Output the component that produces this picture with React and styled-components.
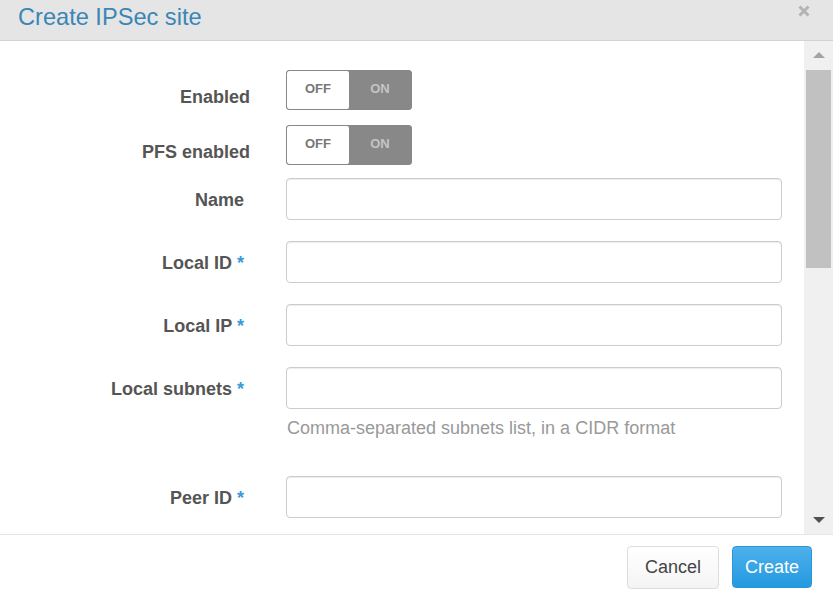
import React from "react";
import styled, { createGlobalStyle } from "styled-components";

const GlobalStyle = createGlobalStyle`
    html, body {
        margin: 0;
        padding: 0;
        background: #ffffff;
    }
    body {
        font-family: "Liberation Sans", Arial, sans-serif;
    }
    * {
        box-sizing: border-box;
    }
`;

const Modal = styled.div`
    width: 833px;
    height: 596px;
    display: flex;
    flex-direction: column;
    background: #fff;
    overflow: hidden;
`;

const Header = styled.div`
    height: 41px;
    flex-shrink: 0;
    display: flex;
    align-items: center;
    justify-content: space-between;
    padding: 0 23px 0 18px;
    background: #e5e5e5;
    border-bottom: 1px solid #d2d2d2;
`;

const Title = styled.h3`
    margin: 0;
    margin-top: -6px;
    font-size: 23.6px;
    font-weight: normal;
    color: #3a86b6;
`;

const CloseButton = styled.button`
    align-self: flex-start;
    margin-top: 5px;
    padding: 0;
    border: none;
    background: transparent;
    display: flex;
`;

const CloseIcon = () => (
    <svg width="12" height="12" viewBox="0 0 12 12">
        <path d="M1.5 1.5 L10.5 10.5 M10.5 1.5 L1.5 10.5" stroke="#b4b4b4" strokeWidth="3" strokeLinecap="butt" />
    </svg>
);

const Body = styled.div`
    flex: 1;
    display: flex;
    min-height: 0;
`;

const Content = styled.div`
    flex: 1;
    padding-top: 29px;
    display: flex;
    flex-direction: column;
    overflow: hidden;
`;

const Row = styled.div`
    display: grid;
    grid-template-columns: ${p => (p.toggle ? "250px" : "244px")} 496px;
    column-gap: ${p => (p.toggle ? "36px" : "42px")};
    align-items: start;
    flex-shrink: 0;
    margin-bottom: ${p => p.gap}px;
`;

const Label = styled.label`
    text-align: right;
    font-size: 18px;
    line-height: 21px;
    font-weight: bold;
    color: #555;
    padding-top: ${p => p.top}px;
`;

const Star = styled.span`
    color: #3a9ad9;
`;

const Field = styled.div`
    display: flex;
    flex-direction: column;
`;

const Input = styled.input`
    width: 496px;
    height: 42px;
    border: 1px solid #ccc;
    border-radius: 4px;
    box-shadow: inset 0 1px 1px rgba(0, 0, 0, 0.075);
    padding: 6px 12px;
    font-size: 16px;
    font-family: inherit;
    outline: none;
`;

const Help = styled.div`
    margin-top: 9px;
    padding-left: 1px;
    font-size: 18px;
    line-height: 21px;
    color: #999;
`;

const Toggle = styled.div`
    width: 126px;
    height: 40px;
    display: flex;
    border: 1px solid #888;
    border-radius: 3px;
    overflow: hidden;
    background: #888;
`;

const ToggleSide = styled.span`
    flex: 1;
    display: flex;
    align-items: center;
    justify-content: center;
    padding-bottom: 3px;
    font-size: 13px;
    font-weight: bold;
    background: ${p => (p.on ? "#888" : "#fff")};
    color: ${p => (p.on ? "#c4c4c4" : "#777")};
    border-radius: ${p => (p.on ? "0" : "2px")};
`;

const Scrollbar = styled.div`
    width: 29px;
    flex-shrink: 0;
    background: #f0f0f0;
    display: flex;
    flex-direction: column;
    align-items: center;
`;

const Arrow = styled.div`
    width: 0;
    height: 0;
    border-left: 6px solid transparent;
    border-right: 6px solid transparent;
    ${p => (p.down
        ? "border-top: 6px solid #505050; margin-top: auto; margin-bottom: 11px;"
        : "border-bottom: 6px solid #a3a3a3; margin-top: 11px;")}
`;

const Thumb = styled.div`
    width: 25px;
    height: 198px;
    margin-top: 12px;
    background: #c1c1c1;
`;

const Footer = styled.div`
    height: 62px;
    flex-shrink: 0;
    border-top: 1px solid #e5e5e5;
    display: flex;
    justify-content: flex-end;
    align-items: flex-start;
    gap: 13px;
    padding: 11px 21px 0 0;
`;

const Button = styled.button`
    height: ${p => (p.primary ? "42px" : "43px")};
    padding: 0 ${p => (p.primary ? "12px" : "17px")};
    font-size: 18px;
    font-family: inherit;
    border-radius: 4px;
    border: 1px solid ${p => (p.primary ? "#2a96d8" : "#ddd")};
    background: ${p => (p.primary
        ? "linear-gradient(#4db1ec, #2499e0)"
        : "linear-gradient(#fff, #f4f4f4)")};
    color: ${p => (p.primary ? "#fff" : "#444")};
`;

const fields = [
    { label: "Name" },
    { label: "Local ID", required: true },
    { label: "Local IP", required: true },
    { label: "Local subnets", required: true, help: "Comma-separated subnets list, in a CIDR format" },
    { label: "Peer ID", required: true },
];

const ToggleRow = ({ label, gap }) => (
    <Row toggle gap={gap}>
        <Label top={17}>{label}</Label>
        <Toggle>
            <ToggleSide>OFF</ToggleSide>
            <ToggleSide on>ON</ToggleSide>
        </Toggle>
    </Row>
);

export default function App() {
    return (
        <Modal>
            <GlobalStyle />
            <Header>
                <Title>Create IPSec site</Title>
                <CloseButton aria-label="Close"><CloseIcon /></CloseButton>
            </Header>
            <Body>
                <Content>
                    <ToggleRow label="Enabled" gap={15} />
                    <ToggleRow label="PFS enabled" gap={13} />
                    {fields.map(f => (
                        <Row key={f.label} gap={f.help ? 37 : 21}>
                            <Label top={12}>
                                {f.label}{f.required && <Star> *</Star>}
                            </Label>
                            <Field>
                                <Input />
                                {f.help && <Help>{f.help}</Help>}
                            </Field>
                        </Row>
                    ))}
                </Content>
                <Scrollbar>
                    <Arrow />
                    <Thumb />
                    <Arrow down />
                </Scrollbar>
            </Body>
            <Footer>
                <Button>Cancel</Button>
                <Button primary>Create</Button>
            </Footer>
        </Modal>
    );
}
